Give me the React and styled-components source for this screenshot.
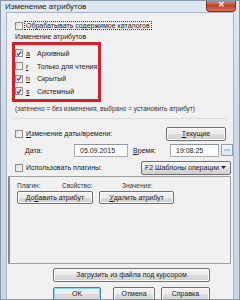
import React from "react";
import styled, { createGlobalStyle } from "styled-components";

const Global = createGlobalStyle`
  body { margin: 0; background: #fff; }
  * { box-sizing: border-box; }
`;

const Frame = styled.div`
  width: 240px;
  height: 300px;
  display: flex;
  flex-direction: column;
  background: linear-gradient(180deg, #dfe8f2 0%, #cdd9e6 40%, #c9d6e4 100%);
  border: 1px solid #8a97a6;
  font-family: "Liberation Sans", Arial, sans-serif;
  color: #1a1a1a;
  overflow: hidden;
`;

const TitleBar = styled.div`
  height: 16px;
  display: flex;
  align-items: center;
  justify-content: space-between;
  padding-left: 4px;
  font-size: 8px;
  color: #222;
`;

const CloseBtn = styled.div`
  width: 30px;
  height: 14px;
  margin-top: -3px;
  margin-right: 3px;
  border: 1px solid #7a2a2a;
  border-top: none;
  border-radius: 0 0 4px 4px;
  background: linear-gradient(180deg, #e6a08d 0%, #d2624a 45%, #c0392b 55%, #d97a60 100%);
  display: flex;
  align-items: center;
  justify-content: center;
  color: #fff;
  font-size: 8px;
  font-weight: bold;
`;

const Client = styled.div`
  flex: 1;
  margin: 0 5px 2px 5px;
  background: #f0f0f0;
  border: 1px solid #a9b5c3;
  padding: 7px 0 0 8px;
  display: flex;
  flex-direction: column;
  font-size: 7px;
`;

const Row = styled.div`
  display: flex;
  align-items: center;
  height: ${p => p.h || 11}px;
  gap: ${p => p.gap || 2}px;
`;

const Box = styled.span`
  width: 8px;
  height: 8px;
  border: 1px solid #8e8f8f;
  background: linear-gradient(135deg, #dcdcdc, #fbfbfb);
  display: inline-flex;
  align-items: center;
  justify-content: center;
  flex-shrink: 0;
`;

const Check = ({ on }) => (
  <Box>
    {on && (
      <svg width="7" height="7" viewBox="0 0 7 7">
        <path d="M1 3.6 L2.8 5.6 L6 1" fill="none" stroke="#2a3a8a" strokeWidth="1.2" />
      </svg>
    )}
  </Box>
);

const Focus = styled.span`
  outline: 1px dotted #333;
  padding: 0 1px;
`;

const Label = styled.span`
  margin-left: ${p => p.ml || 0}px;
`;

const RedBox = styled.div`
  width: 89px;
  margin: 1px 0 0 -3px;
  border: 3px solid #d8202a;
  padding: 2px 0 1px 0;
  display: flex;
  flex-direction: column;
`;

const AttrRow = styled.div`
  display: flex;
  align-items: center;
  height: 12.7px;
`;

const Key = styled.span`
  width: 9px;
  margin-left: 3px;
  text-decoration: underline;
`;

const Note = styled.div`
  margin-top: 3px;
  height: 10px;
  font-size: 6.5px;
  color: #333;
`;

const Separator = styled.div`
  height: 1px;
  margin: 3px 6px 0 -2px;
  background: #dadada;
`;

const DateHead = styled.div`
  display: flex;
  align-items: center;
  justify-content: space-between;
  margin-top: 8px;
  padding-right: 7px;
`;

const Btn = styled.div`
  height: ${p => p.h || 13}px;
  width: ${p => p.w}px;
  margin-left: ${p => p.ml || 0}px;
  border: 1px solid ${p => p.def ? "#3c7fb1" : "#707070"};
  border-radius: 2px;
  background: linear-gradient(180deg, #f2f2f2 0%, #ebebeb 50%, #dddddd 51%, #cfcfcf 100%);
  box-shadow: ${p => p.def ? "inset 0 0 0 1px #8fd0f2" : "inset 0 0 0 1px #fbfbfb"};
  display: flex;
  align-items: center;
  justify-content: center;
  font-size: 7px;
  color: #1a1a1a;
  flex-shrink: 0;
`;

const U = styled.span`
  text-decoration: underline;
`;

const DateRow = styled.div`
  display: grid;
  grid-template-columns: 49px 59px 37px 49px 14px;
  align-items: center;
  margin-top: 3px;
  height: 13px;
  padding-left: 10px;
`;

const Input = styled.div`
  height: 13px;
  margin-right: ${p => p.mr || 0}px;
  border: 1px solid #abadb3;
  border-top-color: #8e9299;
  background: #fff;
  display: flex;
  align-items: center;
  padding-left: 5px;
  font-size: 7px;
`;

const SmallBtn = styled.div`
  width: 12px;
  height: 12px;
  margin-left: 2px;
  border: 1px solid #8aa2c0;
  background: linear-gradient(180deg, #f4f8fc, #dce6f1);
  font-size: 5.5px;
  color: #4a6a90;
  display: flex;
  align-items: center;
  justify-content: center;
`;

const PluginRow = styled.div`
  display: flex;
  align-items: center;
  justify-content: space-between;
  margin-top: 4px;
  height: 14px;
  padding-right: 2px;
`;

const Select = styled.div`
  width: 90px;
  height: 14px;
  border: 1px solid #707070;
  border-radius: 2px;
  background: linear-gradient(180deg, #f2f2f2 0%, #ebebeb 50%, #dddddd 51%, #cfcfcf 100%);
  display: flex;
  align-items: center;
  justify-content: space-between;
  padding: 0 4px 0 3px;
  font-size: 7px;
`;

const Panel = styled.div`
  height: 88px;
  margin: 1px 2px 0 -7px;
  border: 1px solid #a0a0a0;
  border-left: 2px solid #8a8a8a;
  background: #f1f1f1;
  padding: 4px 0 0 7px;
  display: flex;
  flex-direction: column;
`;

const Cols = styled.div`
  display: grid;
  grid-template-columns: 45px 60px 1fr;
  height: 9px;
  align-items: center;
  font-size: 6.5px;
  color: #333;
`;

const PanelBtns = styled.div`
  display: flex;
  gap: 6px;
  margin-top: 1px;
`;

const Bottom = styled.div`
  display: flex;
  flex-direction: column;
  align-items: flex-start;
  padding-left: 38px;
  gap: 5px;
  margin-top: 4px;
`;

const BtnRow = styled.div`
  display: flex;
`;

const attrs = [
  { k: "a", label: "Архивный", on: true },
  { k: "r", label: "Только для чтения", on: false },
  { k: "h", label: "Скрытый", on: true },
  { k: "s", label: "Системный", on: true },
];

export default function App() {
  return (
    <>
      <Global />
      <Frame>
        <TitleBar>
          <span>Изменение атрибутов</span>
          <CloseBtn>✕</CloseBtn>
        </TitleBar>
        <Client>
          <Row>
            <Check />
            <Focus>Обрабатывать содержимое каталогов</Focus>
          </Row>
          <Row h={10}>
            <Label>Изменение атрибутов</Label>
          </Row>
          <RedBox>
            {attrs.map(a => (
              <AttrRow key={a.k}>
                <Check on={a.on} />
                <Key>{a.k}</Key>
                <Label ml={2}>{a.label}</Label>
              </AttrRow>
            ))}
          </RedBox>
          <Note>(затенено = без изменения, выбрано = установить атрибут)</Note>
          <Separator />
          <DateHead>
            <Row gap={3}>
              <Check />
              <span><U>И</U>зменение даты/времени:</span>
            </Row>
            <Btn w={60} h={14}><U>Т</U>екущие</Btn>
          </DateHead>
          <DateRow>
            <span><U>Д</U>ата:</span>
            <Input mr={5}>05.09.2015</Input>
            <span><U>В</U>ремя:</span>
            <Input>19:08:25</Input>
            <SmallBtn>&gt;&gt;</SmallBtn>
          </DateRow>
          <PluginRow>
            <Row gap={3}>
              <Check />
              <span>Использовать плагины:</span>
            </Row>
            <Select>
              <span>F2 Шаблоны операции</span>
              <svg width="5" height="3" viewBox="0 0 5 3"><path d="M0 0 H5 L2.5 3 Z" fill="#222" /></svg>
            </Select>
          </PluginRow>
          <Panel>
            <Cols>
              <span>Плагин:</span>
              <span>Свойство:</span>
              <span>Значение:</span>
            </Cols>
            <PanelBtns>
              <Btn w={76} h={13}>До<U>б</U>авить атрибут</Btn>
              <Btn w={75} h={13}><U>У</U>далить атрибут</Btn>
            </PanelBtns>
          </Panel>
          <Bottom>
            <Btn w={157} h={14}>Загрузить из файла под курсором</Btn>
            <BtnRow>
              <Btn w={48} h={14} def>OK</Btn>
              <Btn w={42} h={14} ml={12}>Отмена</Btn>
              <Btn w={49} h={14} ml={6}>Справка</Btn>
            </BtnRow>
          </Bottom>
        </Client>
      </Frame>
    </>
  );
}
